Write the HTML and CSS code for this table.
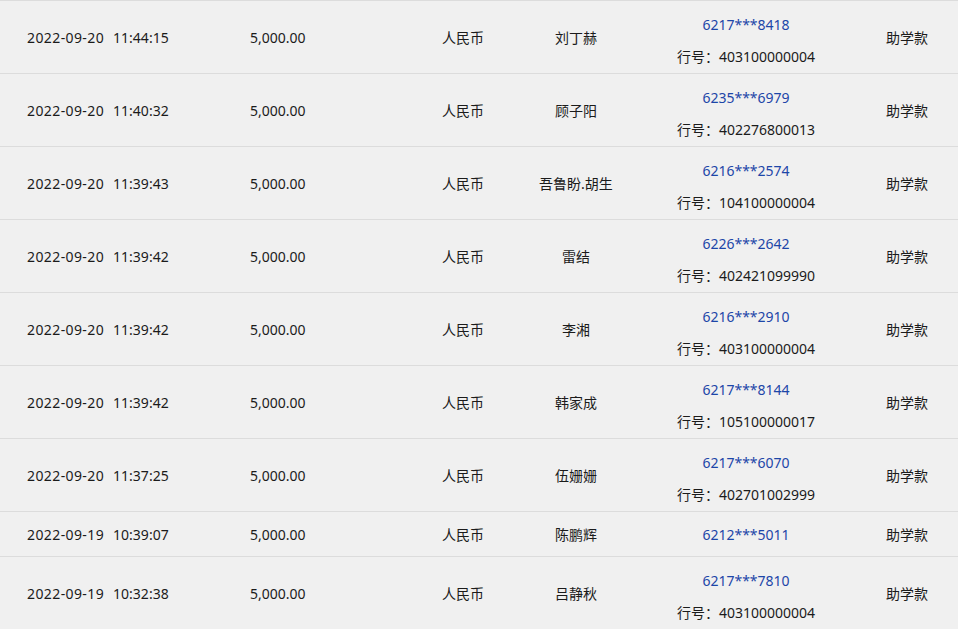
FILE: index.html
```html
<!DOCTYPE html>
<html lang="zh-CN">
<head>
<meta charset="utf-8">
<title>转账记录</title>
<link rel="stylesheet" href="styles.css">
</head>
<body>
<div class="list">
  <div class="row">
    <div class="c-date"><span class="d">2022-09-20</span><span class="t">11:44:15</span></div>
    <div class="c-amt">5,000.00</div>
    <div class="c-cur">人民币</div>
    <div class="c-name">刘丁赫</div>
    <div class="c-card"><span class="card">6217***8418</span><span class="bank">行号：403100000004</span></div>
    <div class="c-use">助学款</div>
  </div>
  <div class="row">
    <div class="c-date"><span class="d">2022-09-20</span><span class="t">11:40:32</span></div>
    <div class="c-amt">5,000.00</div>
    <div class="c-cur">人民币</div>
    <div class="c-name">顾子阳</div>
    <div class="c-card"><span class="card">6235***6979</span><span class="bank">行号：402276800013</span></div>
    <div class="c-use">助学款</div>
  </div>
  <div class="row">
    <div class="c-date"><span class="d">2022-09-20</span><span class="t">11:39:43</span></div>
    <div class="c-amt">5,000.00</div>
    <div class="c-cur">人民币</div>
    <div class="c-name">吾鲁盼.胡生</div>
    <div class="c-card"><span class="card">6216***2574</span><span class="bank">行号：104100000004</span></div>
    <div class="c-use">助学款</div>
  </div>
  <div class="row">
    <div class="c-date"><span class="d">2022-09-20</span><span class="t">11:39:42</span></div>
    <div class="c-amt">5,000.00</div>
    <div class="c-cur">人民币</div>
    <div class="c-name">雷结</div>
    <div class="c-card"><span class="card">6226***2642</span><span class="bank">行号：402421099990</span></div>
    <div class="c-use">助学款</div>
  </div>
  <div class="row">
    <div class="c-date"><span class="d">2022-09-20</span><span class="t">11:39:42</span></div>
    <div class="c-amt">5,000.00</div>
    <div class="c-cur">人民币</div>
    <div class="c-name">李湘</div>
    <div class="c-card"><span class="card">6216***2910</span><span class="bank">行号：403100000004</span></div>
    <div class="c-use">助学款</div>
  </div>
  <div class="row">
    <div class="c-date"><span class="d">2022-09-20</span><span class="t">11:39:42</span></div>
    <div class="c-amt">5,000.00</div>
    <div class="c-cur">人民币</div>
    <div class="c-name">韩家成</div>
    <div class="c-card"><span class="card">6217***8144</span><span class="bank">行号：105100000017</span></div>
    <div class="c-use">助学款</div>
  </div>
  <div class="row">
    <div class="c-date"><span class="d">2022-09-20</span><span class="t">11:37:25</span></div>
    <div class="c-amt">5,000.00</div>
    <div class="c-cur">人民币</div>
    <div class="c-name">伍姗姗</div>
    <div class="c-card"><span class="card">6217***6070</span><span class="bank">行号：402701002999</span></div>
    <div class="c-use">助学款</div>
  </div>
  <div class="row short">
    <div class="c-date"><span class="d">2022-09-19</span><span class="t">10:39:07</span></div>
    <div class="c-amt">5,000.00</div>
    <div class="c-cur">人民币</div>
    <div class="c-name">陈鹏辉</div>
    <div class="c-card single"><span class="card">6212***5011</span></div>
    <div class="c-use">助学款</div>
  </div>
  <div class="row">
    <div class="c-date"><span class="d">2022-09-19</span><span class="t">10:32:38</span></div>
    <div class="c-amt">5,000.00</div>
    <div class="c-cur">人民币</div>
    <div class="c-name">吕静秋</div>
    <div class="c-card"><span class="card">6217***7810</span><span class="bank">行号：403100000004</span></div>
    <div class="c-use">助学款</div>
  </div>
</div>
</body>
</html>
```

FILE: styles.css
```css
html, body {
  margin: 0;
  padding: 0;
  background: #f0f0f0;
}
body {
  font-family: "Noto Sans", "Noto Sans CJK SC", sans-serif;
  font-size: 14px;
  color: #1b1b1b;
  width: 958px;
  height: 629px;
  overflow: hidden;
}
.list {
  display: flex;
  flex-direction: column;
}
.row {
  display: grid;
  grid-template-columns: 250px 160px 106px 120px 220px 102px;
  height: 70px;
  padding-top: 2px;
  border-top: 1px solid #dcdcdc;
  align-items: center;
  line-height: 20px;
}
.row.short {
  height: 42px;
}
.c-date {
  padding-left: 27px;
  white-space: nowrap;
}
.c-date .d {
  letter-spacing: 0.4px;
}
.c-date .t {
  margin-left: 9px;
}
.c-amt {
  text-align: left;
}
.c-cur, .c-name, .c-use {
  text-align: center;
}
.c-card {
  display: flex;
  flex-direction: column;
  align-items: center;
  gap: 12px;
  padding-top: 6px;
}
.c-card.single {
  padding-top: 0;
}
.card {
  color: #1d46a8;
}
```
